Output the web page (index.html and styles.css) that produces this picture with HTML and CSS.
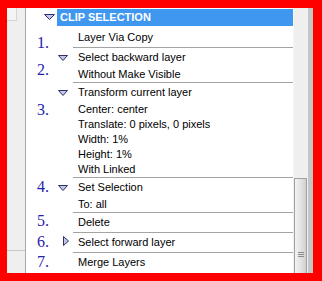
FILE: index.html
```html
<!DOCTYPE html>
<html lang="en">

<head>
    <meta charset="UTF-8">
    <meta name="viewport" content="width=device-width, initial-scale=1.0">
    <title>Clip Selection Actions</title>
    <link rel="stylesheet" href="styles.css">
</head>

<body>

    <div class="frame">
        <!-- Left strip -->
        <div class="side">
            <div class="side-box"></div>
            <div class="side-fill"></div>
            <div class="side-foot"></div>
        </div>

        <!-- Action list -->
        <div class="list">
            <div class="clip">
                <span class="clip-tw">
                    <svg class="tri-down" width="11" height="6" viewBox="0 0 11 6"><polygon points="0.5,0.5 10.5,0.5 5.5,5.5" /></svg>
                </span>
                <div class="clip-bar">CLIP SELECTION</div>
            </div>

            <div class="step">
                <span class="num num-mid">1.</span>
                <span class="tw"></span>
                <div class="body first">
                    <div class="head">Layer Via Copy</div>
                </div>
            </div>

            <div class="step">
                <span class="num num-low">2.</span>
                <span class="tw">
                    <svg class="tri-down" width="10" height="6" viewBox="0 0 10 6"><polygon points="0.5,0.5 9.5,0.5 5,5.5" /></svg>
                </span>
                <div class="body">
                    <div class="head">Select backward layer</div>
                    <div class="sub">Without Make Visible</div>
                </div>
            </div>

            <div class="step">
                <span class="num num-lower">3.</span>
                <span class="tw">
                    <svg class="tri-down" width="10" height="6" viewBox="0 0 10 6"><polygon points="0.5,0.5 9.5,0.5 5,5.5" /></svg>
                </span>
                <div class="body">
                    <div class="head">Transform current layer</div>
                    <div class="sub">Center: center</div>
                    <div class="sub">Translate: 0 pixels, 0 pixels</div>
                    <div class="sub">Width: 1%</div>
                    <div class="sub">Height: 1%</div>
                    <div class="sub">With Linked</div>
                </div>
            </div>

            <div class="step">
                <span class="num">4.</span>
                <span class="tw">
                    <svg class="tri-down" width="10" height="6" viewBox="0 0 10 6"><polygon points="0.5,0.5 9.5,0.5 5,5.5" /></svg>
                </span>
                <div class="body">
                    <div class="head">Set Selection</div>
                    <div class="sub">To: all</div>
                </div>
            </div>

            <div class="step">
                <span class="num num-up">5.</span>
                <span class="tw"></span>
                <div class="body">
                    <div class="head">Delete</div>
                </div>
            </div>

            <div class="step">
                <span class="num">6.</span>
                <span class="tw">
                    <svg class="tri-right" width="6" height="10" viewBox="0 0 6 10"><polygon points="0.5,0.5 5.5,5 0.5,9.5" /></svg>
                </span>
                <div class="body">
                    <div class="head">Select forward layer</div>
                </div>
            </div>

            <div class="step">
                <span class="num">7.</span>
                <span class="tw"></span>
                <div class="body">
                    <div class="head">Merge Layers</div>
                </div>
            </div>
        </div>

        <!-- Scrollbar -->
        <div class="scroll">
            <div class="track"></div>
            <div class="thumb">
                <div class="grip"><i></i><i></i><i></i></div>
            </div>
        </div>
    </div>

</body>

</html>
```

FILE: styles.css
```css
body {
    margin: 0;
    background-color: #ff0000;
    font-family: "Liberation Sans", Arial, sans-serif;
    font-size: 11px;
    color: #000;
}

.frame {
    display: flex;
    height: 265px;
    margin: 8px 9px 8px 7px;
    background-color: #fff;
    overflow: hidden;
}

/* Left strip */
.side {
    display: flex;
    flex-direction: column;
    width: 18px;
    background-color: #efefef;
    border-right: 1px solid #a9a9a9;
}

.side-box {
    height: 12px;
    margin-right: 8px;
    border-bottom: 1px solid #d4d4d4;
    border-right: 1px solid #d4d4d4;
    background-color: #f4f4f4;
}

.side-fill {
    flex: 1;
}

.side-foot {
    height: 22px;
    border-top: 1px solid #c9c9c9;
}

/* Action list */
.list {
    flex: 1;
    padding-top: 1px;
}

.clip {
    display: flex;
    padding-bottom: 1px;
}

.clip-tw {
    width: 31px;
    padding-left: 17px;
    box-sizing: border-box;
}

.clip-tw .tri-down {
    display: block;
    margin-top: 5px;
}

.clip-bar {
    flex: 1;
    height: 17px;
    line-height: 17px;
    padding-left: 3px;
    background-color: #3f97f0;
    color: #fff;
    font-weight: bold;
}

.step {
    display: flex;
    align-items: flex-start;
}

/* numbers are pasted-on marks, they must not stretch the rows */
.num {
    width: 31px;
    padding-left: 11px;
    padding-top: 2px;
    margin-bottom: -20px;
    box-sizing: border-box;
    font-family: "Liberation Serif", "Times New Roman", serif;
    font-size: 16px;
    line-height: 16px;
    color: #1f23ad;
}

.num-up {
    padding-top: 1px;
}

.num-mid {
    padding-top: 8px;
}

.num-low {
    padding-top: 15px;
}

.num-lower {
    padding-top: 20px;
}

.tw {
    width: 16px;
}

.tri-down {
    display: block;
    margin: 8px 0 0 1px;
}

.tri-right {
    display: block;
    margin: 4px 0 0 6px;
}

.tri-down polygon,
.tri-right polygon {
    fill: #c3c5e6;
    stroke: #2e3168;
    stroke-width: 1;
}

.body {
    flex: 1;
    border-top: 1px solid #a3a3a3;
    padding-left: 5px;
}

.body.first {
    border-top: none;
}

.head {
    height: 19px;
    line-height: 19px;
}

.body.first .head {
    height: 20px;
    line-height: 20px;
}

.sub {
    height: 15px;
    line-height: 15px;
}

/* Scrollbar */
.scroll {
    display: flex;
    flex-direction: column;
    width: 15px;
    background-color: #efefef;
    border-right: 5px solid #c6c6c6;
}

.track {
    height: 170px;
    border-left: 1px solid #f7f7f7;
}

.thumb {
    flex: 1;
    margin: 0 1px;
    border: 1px solid #a2a2a2;
    border-bottom: none;
    background: linear-gradient(to right, #f2f2f2, #e0e0e0 60%, #cfcfcf);
    display: flex;
    flex-direction: column;
    justify-content: flex-end;
    padding-bottom: 16px;
}

.grip {
    display: flex;
    flex-direction: column;
    gap: 1px;
    align-items: center;
}

.grip i {
    display: block;
    width: 6px;
    height: 1px;
    background-color: #8a8a8a;
}
```
